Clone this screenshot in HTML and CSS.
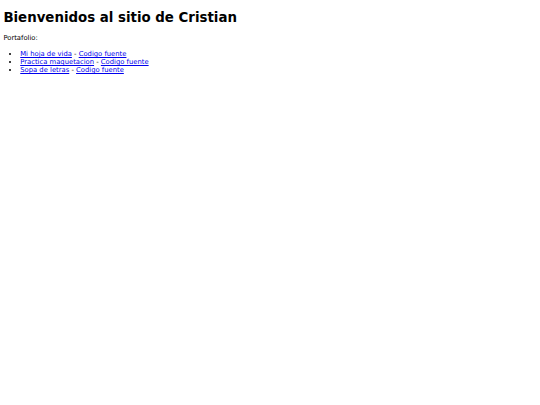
FILE: index.html
```html
<!DOCTYPE html>
<html lang="es">
<head>
<meta charset="utf-8">
<title>Cristian</title>
<link rel="stylesheet" href="styles.css">
</head>
<body>
<h1 class="title">Bienvenidos al sitio de Cristian</h1>
<p class="intro">Portafolio:</p>
<ul class="projects">
<li><a href="#">Mi hoja de vida</a> - <a href="#">Codigo fuente</a></li>
<li><a href="#">Practica maquetacion</a> - <a href="#">Codigo fuente</a></li>
<li><a href="#">Sopa de letras</a> - <a href="#">Codigo fuente</a></li>
</ul>
</body>
</html>
```
FILE: styles.css
```css
html {
  background: #fff;
}
body {
  margin: 3.375px;
  font-family: "DejaVu Sans", sans-serif;
  font-size: 6.8px;
  color: #000;
}
.title {
  font-size: 13.35px;
  font-weight: bold;
  margin: 7px 0 9px;
}
.intro {
  margin: 0 0 7.75px;
}
.projects {
  margin: 7.75px 0;
  padding-left: 16.875px;
}
.projects a {
  color: #0000ee;
}
```
